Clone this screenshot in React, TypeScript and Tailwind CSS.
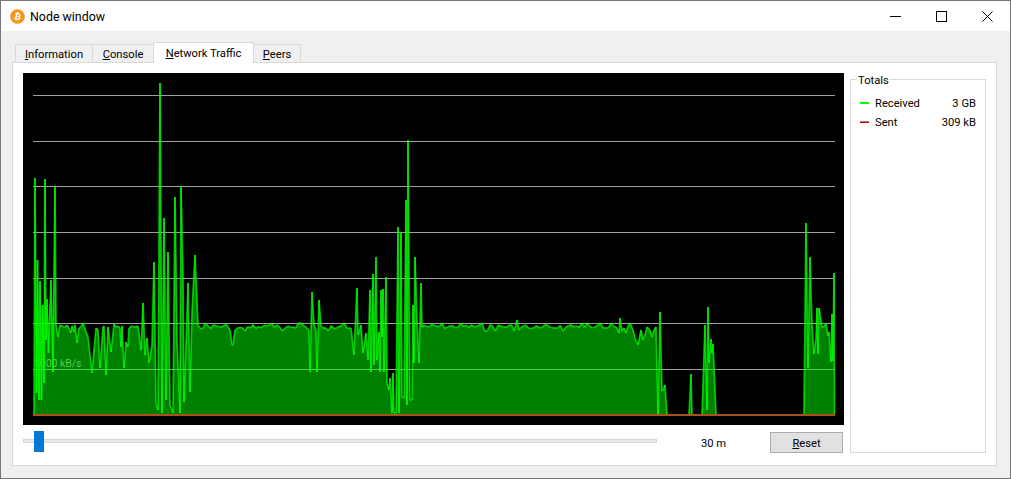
import { FaBitcoin } from "react-icons/fa";

type Pt = [number, number];

const BASE = 415;
const GRID = [95, 141, 186, 232, 278, 323, 369];

// small repeatable noise so the plateau looks the same on every load
const plateau = (from: number, to: number, seed: number): Pt[] => {
  const out: Pt[] = [];
  let s = seed;
  for (let x = from; x < to; x += 2.67) {
    s = (s * 9301 + 49297) % 233280;
    const r = s / 233280;
    out.push([x, r > 0.93 ? 331 : r < 0.1 ? 323 : 324 + r * 5]);
  }
  return out;
};

const data: Pt[] = [
  [34, BASE], [35, 178], [36.5, 393], [37.5, 260], [39, 400], [40, 281], [41.5, 400], [42.5, 305],
  [44, 383], [45, 179], [46, 340], [47, 299], [48.5, 353], [51, 280], [53, 372], [55, 186],
  [56, 325], [58, 337], [60, 325], [62, 326], [65, 327], [67, 325], [69, 328], [71, 333],
  [72, 326], [74, 332], [75, 325], [77, 343], [79, 328], [81, 327], [83, 323], [85, 329],
  [88, 337], [92, 373], [96, 328], [98, 330], [100, 368], [103, 327], [104, 326], [106, 375],
  [108, 327], [111, 352], [114, 324], [116, 327], [118, 326], [120, 328], [121, 347], [122, 326],
  [124, 368], [126, 342], [128, 347], [129, 328], [132, 326], [135, 327], [138, 326], [141, 350],
  [143, 303], [145, 355], [147, 338], [149, 363], [152, 345], [154, 262], [156, 403], [158, 410],
  [160, 83], [162, 413], [164, 218], [166, 400], [168, 252], [170, 405], [173, 413], [175, 197],
  [177, 340], [180, 413], [181, 186], [183, 275], [184, 402], [186, 345], [188, 283], [190, 392],
  [192, 313], [193, 292], [195, 255], [198, 325],
  ...plateau(200, 229, 17),
  [230, 330], [232, 345], [233, 345], [235, 330],
  ...plateau(237, 308, 43),
  [309, 330], [310, 372], [312, 292], [314, 325], [316, 330], [317, 372], [319, 300], [321, 326],
  ...plateau(323, 349, 91),
  [351, 328], [354, 355], [357, 288], [358, 335], [361, 325], [363, 353], [366, 333], [368, 360],
  [370, 290], [371, 372], [373, 274], [374, 365], [376, 257], [377, 360], [379, 332], [380, 372],
  [381, 290], [382, 337], [383, 289], [384, 372], [386, 277], [387, 383], [389, 390], [390, 378],
  [392, 413], [393, 373], [394, 413], [396, 413], [398, 227], [399, 413], [401, 232], [402, 397],
  [404, 398], [406, 200], [407, 405], [408, 140], [410, 400], [412, 400], [413, 305], [414, 363],
  [415, 257], [417, 320], [419, 363], [421, 283], [422, 327], [424, 325],
  ...plateau(426, 516, 7),
  [517, 320], [519, 330], [521, 327],
  ...plateau(523, 618, 131),
  [619, 333], [620, 318], [622, 331], [624, 328], [626, 333], [628, 326], [630, 323], [633, 330],
  [635, 338], [638, 345], [641, 330], [643, 340], [645, 335], [647, 327], [650, 330], [652, 337],
  [654, 330], [656, 327], [658, BASE - 1], [660, 312], [662, 391], [663, 390], [665, 385], [667, BASE],
  [689, BASE], [691, 374], [692, BASE], [702, BASE], [705, 325], [707, 410], [708, 307], [709, 363],
  [711, 339], [712, 353], [713, 344], [716, BASE], [804, BASE], [806, 223], [808, 368], [810, 257],
  [812, 325], [814, 354], [816, 339], [817, 308], [818, 354], [819, 308], [822, 327], [824, 327],
  [826, 323], [828, 336], [829, 332], [831, 362], [832, 314], [833, 361], [834, 273], [834.5, BASE],
];

// the first burst stays filled under its dips, only the line goes down
const fillData = data.map(([x, y]): Pt => (x > 35 && x < 56 && y > 325 ? [x, 325] : [x, y]));

const TrafficChart = () => (
  <div className="h-[352px] w-[821px] bg-black">
    <svg viewBox="23 73 821 352" width={821} height={352} className="block">
      {GRID.map((y) => (
        <line key={y} x1={33} x2={835} y1={y + 0.5} y2={y + 0.5} stroke="#a0a0a0" strokeWidth={1} shapeRendering="crispEdges" />
      ))}
      <text x={34} y={367} fontSize={10.4} fill="#a0a0a0" fontFamily="Roboto, sans-serif">
        1000 kB/s
      </text>
      <polygon points={fillData.map((p) => p.join(",")).join(" ")} fill="#00ff00" fillOpacity={0.5} />
      {data.slice(1).map((p, i) => (
        <line
          key={i}
          x1={data[i][0]}
          y1={data[i][1]}
          x2={p[0]}
          y2={p[1]}
          stroke="#00ff00"
          strokeOpacity={0.72}
          strokeWidth={1.7}
        />
      ))}
      <line x1={33} x2={835} y1={415} y2={415} stroke="#a8501e" strokeWidth={2} shapeRendering="crispEdges" />
    </svg>
  </div>
);

const WindowButton = ({ children }: { children: React.ReactNode }) => (
  <div className="flex h-[30px] w-[46px] items-center justify-center">
    <svg width={11} height={11} viewBox="0 0 11 11" fill="none" stroke="#000" strokeWidth={1}>
      {children}
    </svg>
  </div>
);

const Tab = ({ mnemonic, rest, width, active }: { mnemonic: string; rest: string; width: string; active?: boolean }) => (
  <div
    className={
      active
        ? `relative z-10 -mb-px flex h-[21px] items-center justify-center border border-b-0 border-[#d9d9d9] bg-white pt-[2px] ${width}`
        : `-ml-px mt-[2px] flex h-[18px] items-center justify-center border border-b-0 border-[#d9d9d9] bg-[#f0f0f0] pt-[3px] ${width}`
    }
  >
    <span>
      <u>{mnemonic}</u>
      {rest}
    </span>
  </div>
);

const LegendRow = ({ label, value, children }: { label: string; value: string; children: React.ReactNode }) => (
  <div className="flex h-[19px] items-center">
    <div className="mr-[6px] mb-[3px] flex h-[2px] w-[9px] flex-col">{children}</div>
    <span>{label}</span>
    <span className="ml-auto">{value}</span>
  </div>
);

export default function App() {
  return (
    <div className="relative flex h-[479px] w-[1011px] flex-col overflow-hidden border border-[#767676] bg-[#f0f0f0] font-['Roboto',sans-serif] text-[11.2px] text-black">
      <div className="absolute -top-px left-[88px] h-px w-[60px] bg-[#222]" />
      <div className="absolute -top-px left-[864px] h-px w-[60px] bg-[#222]" />

      <div className="flex h-[30px] shrink-0 items-center bg-white">
        <FaBitcoin className="ml-[9px] text-[#f7931a]" size={15} />
        <span className="ml-[5px] pt-[2px] text-[12.4px]">Node window</span>
        <div className="ml-auto flex">
          <WindowButton>
            <path d="M0 5.5H11" />
          </WindowButton>
          <WindowButton>
            <rect x="0.5" y="0.5" width="10" height="10" />
          </WindowButton>
          <WindowButton>
            <path d="M0.5 0.5L10.5 10.5M10.5 0.5L0.5 10.5" />
          </WindowButton>
        </div>
      </div>

      <div className="flex flex-1 flex-col px-[11px] pt-[11px]">
        <div className="flex h-[20px] items-start pl-[2px]">
          <Tab mnemonic="I" rest="nformation" width="w-[78px] ml-px" />
          <Tab mnemonic="C" rest="onsole" width="w-[62px]" />
          <Tab mnemonic="N" rest="etwork Traffic" width="w-[101px] -ml-px" active />
          <Tab mnemonic="P" rest="eers" width="w-[48px]" />
        </div>

        <div className="flex h-[404px] w-[985px] gap-[6px] border border-[#d9d9d9] bg-white pl-[10px] pt-[10px]">
          <div className="flex flex-col">
            <TrafficChart />
            <div className="flex h-[28px] items-center pt-[7px]">
              <div className="relative mb-[3px] h-[4px] w-[634px] bg-[#e7e7e7] outline outline-1 -outline-offset-1 outline-[#d6d6d6]">
                <div className="absolute -top-[8px] left-[11px] h-[21px] w-[10px] bg-[#0078d7]" />
              </div>
              <span className="ml-[44px] w-[69px] pt-[4px]">30 m</span>
              <div className="flex h-[21px] w-[73px] items-center justify-center border border-[#adadad] bg-[#e1e1e1] pt-[3px]">
                <span>
                  <u>R</u>eset
                </span>
              </div>
            </div>
          </div>

          <div className="relative mt-[6px] h-[374px] w-[136px] border border-[#d9d9d9] pl-[9px] pr-[9px] pt-[15px]">
            <span className="absolute -top-[6px] left-[6px] bg-white px-[1px] leading-[14px]">Totals</span>
            <LegendRow label="Received" value="3 GB">
              <div className="h-[2px] bg-[#00ff00]" />
            </LegendRow>
            <LegendRow label="Sent" value="309 kB">
              <div className="h-px bg-[#808080]" />
              <div className="h-px bg-[#e00000]" />
            </LegendRow>
          </div>
        </div>
      </div>
    </div>
  );
}
